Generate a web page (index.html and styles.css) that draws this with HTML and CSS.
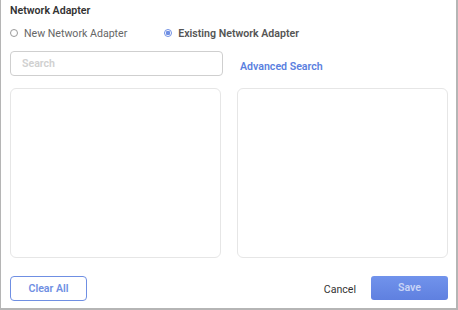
FILE: index.html
```html
<!DOCTYPE html>
<html lang="en">
<head>
    <meta charset="UTF-8">
    <title>Network Adapter</title>
    <link rel="stylesheet" href="styles.css">
</head>
<body>
    <div class="dialog">
        <h2 class="title">Network Adapter</h2>

        <div class="radio-row">
            <label class="radio">
                <span class="dot"></span>
                New Network Adapter
            </label>
            <label class="radio checked">
                <span class="dot"></span>
                Existing Network Adapter
            </label>
        </div>

        <div class="search-row">
            <input type="text" class="search" placeholder="Search">
            <a class="advanced" href="#">Advanced Search</a>
        </div>

        <div class="lists">
            <div class="list"></div>
            <div class="list"></div>
        </div>

        <div class="footer">
            <button class="btn-outline">Clear All</button>
            <div class="actions">
                <button class="btn-link">Cancel</button>
                <button class="btn-primary">Save</button>
            </div>
        </div>
    </div>
</body>
</html>
```

FILE: styles.css
```css
body {
    margin: 0;
    font-family: Roboto, "Liberation Sans", sans-serif;
    font-size: 10.6px;
    color: #333;
    background: #fff;
}
.dialog {
    box-sizing: border-box;
    width: 458px;
    height: 310px;
    border: 1px solid #b5b5b5;
    border-width: 0 2px 2px 1px;
    padding: 4px 8px 0 9px;
    display: flex;
    flex-direction: column;
}
.title {
    margin: 0;
    font-size: 10.6px;
    font-weight: 600;
    line-height: 14px;
    color: #333;
}
.radio-row {
    display: flex;
    margin-top: 8px;
    height: 14px;
    align-items: center;
}
.radio {
    display: flex;
    align-items: center;
    gap: 6px;
    color: #666;
    cursor: pointer;
}
.radio + .radio {
    margin-left: 37px;
}
.radio.checked {
    color: #555;
    font-weight: 600;
}
.dot {
    box-sizing: border-box;
    width: 8px;
    height: 8px;
    border: 1px solid #9a9a9a;
    border-radius: 50%;
}
.checked .dot {
    border-color: #6f8fe3;
    background: radial-gradient(circle, #6f8fe3 0 2px, #fff 2.5px);
}
.search-row {
    display: flex;
    align-items: center;
    margin-top: 11px;
}
.search {
    box-sizing: border-box;
    width: 213px;
    height: 25px;
    padding: 0 11px;
    border: 1px solid #cfcfcf;
    border-radius: 4px;
    font-family: inherit;
    font-size: 10.6px;
    outline: none;
}
.search::placeholder {
    color: #d0d0d0;
    font-weight: 600;
}
.advanced {
    margin-left: 17px;
    margin-top: 5px;
    color: #5a80e0;
    font-weight: 600;
    text-decoration: none;
}
.lists {
    display: flex;
    justify-content: space-between;
    margin-top: 12px;
}
.list {
    box-sizing: border-box;
    width: 211px;
    height: 170px;
    border: 1px solid #e6e6e6;
    border-radius: 6px;
}
.footer {
    display: flex;
    justify-content: space-between;
    align-items: center;
    margin-top: 18px;
}
.btn-outline {
    box-sizing: border-box;
    width: 77px;
    height: 25px;
    background: #fff;
    border: 1px solid #6f8fe3;
    border-radius: 4px;
    color: #6f8fe3;
    font-family: inherit;
    font-size: 10.6px;
    font-weight: 600;
}
.actions {
    display: flex;
    align-items: center;
}
.btn-link {
    background: none;
    border: none;
    padding: 0;
    margin: 2px 15px 0 0;
    color: #333;
    font-family: inherit;
    font-size: 10.6px;
}
.btn-primary {
    width: 77px;
    height: 24px;
    margin-top: -2px;
    border: none;
    border-radius: 3px;
    background: linear-gradient(#7193ec, #5f80e0);
    color: #c8d4f6;
    font-family: inherit;
    font-size: 10.6px;
    font-weight: 600;
}
```
